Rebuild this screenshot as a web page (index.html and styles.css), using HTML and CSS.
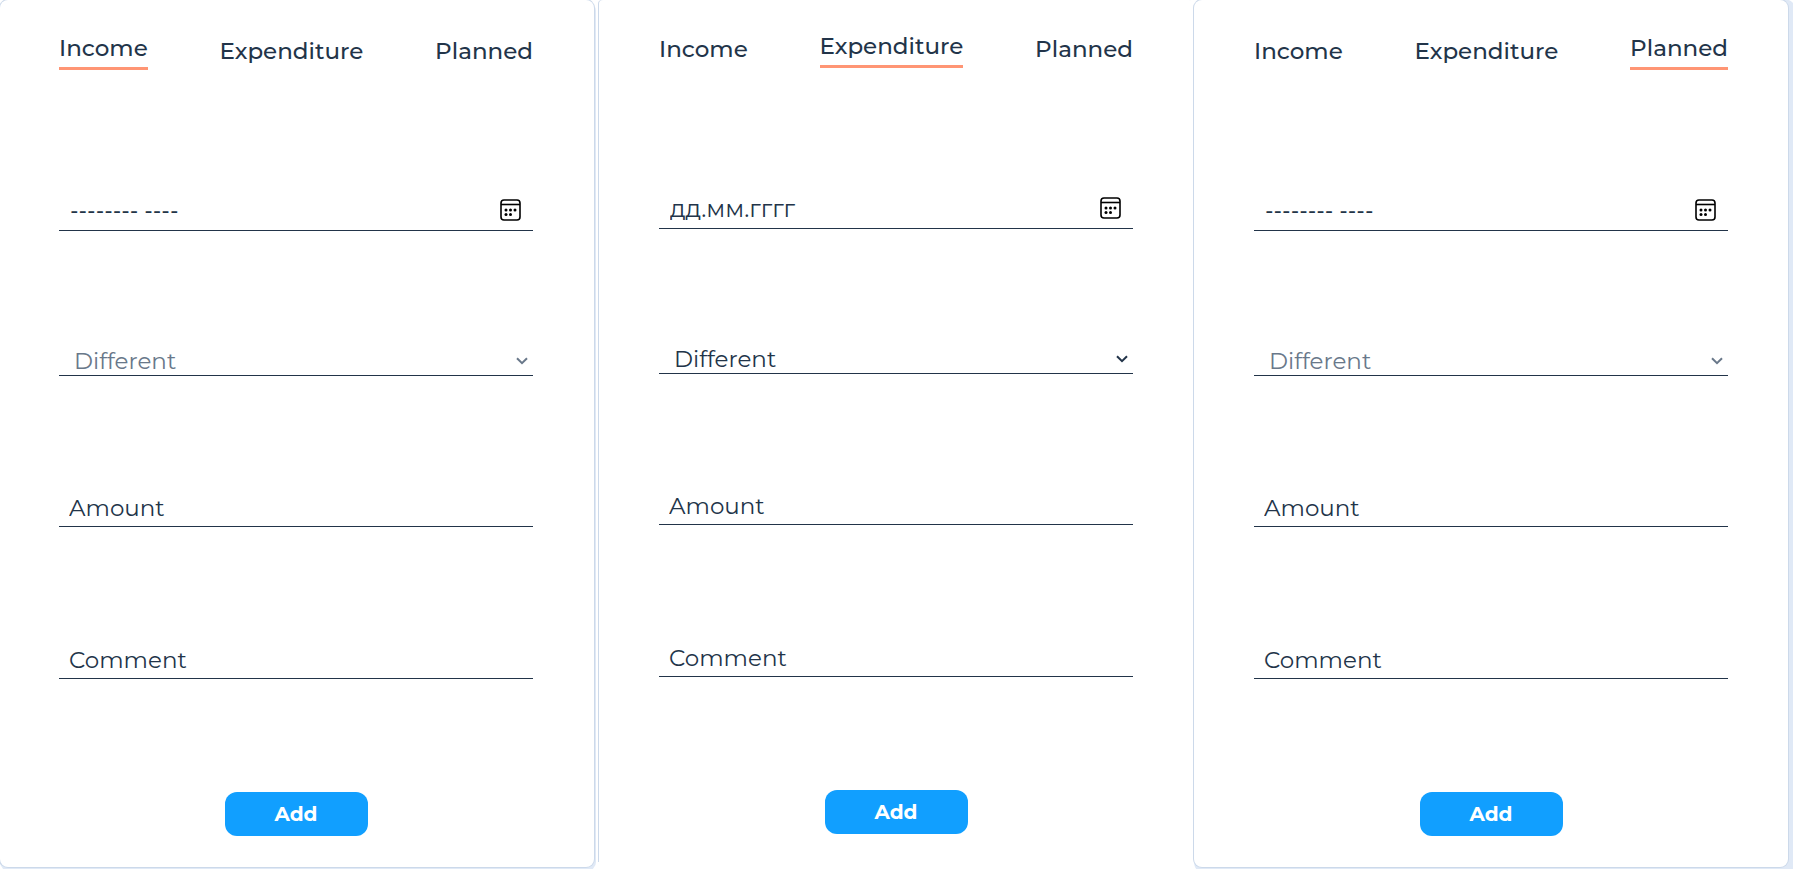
FILE: index.html
```
<!DOCTYPE html>
<html lang="en">
<head>
<meta charset="utf-8">
<meta name="viewport" content="width=device-width, initial-scale=1">
<title>Transactions</title>
<link rel="stylesheet" href="styles.css">
</head>
<body>
<svg class="sprite" aria-hidden="true">
  <symbol id="calendar" viewBox="0 0 22 22">
    <rect x="1" y="1" width="19" height="20" rx="3" fill="none" stroke="#000" stroke-width="1.6"/>
    <path d="M1 5.500h19" stroke="#000" stroke-width="1.6"/>
    <g fill="#000"><circle cx="6" cy="11" r="1.500"/><circle cx="10.500" cy="11" r="1.500"/><circle cx="15" cy="11" r="1.500"/><circle cx="6" cy="15.500" r="1.500"/><circle cx="10.500" cy="15.500" r="1.500"/></g>
  </symbol>
  <symbol id="chevron" viewBox="0 0 12 8">
    <path d="M1 1.200l5 5 5-5" fill="none" stroke="currentColor" stroke-width="2"/>
  </symbol>
</svg>
<main class="board">
  <form class="card card-first">
    <nav class="tabs">
      <a class="tab tab-active" href="#income">Income</a>
      <a class="tab" href="#expenditure">Expenditure</a>
      <a class="tab" href="#planned">Planned</a>
    </nav>
    <div class="field field-date">
      <input class="control control-dashes" type="text" aria-label="Date" value="-------- ----">
      <button class="picker" type="button" aria-label="Open calendar"><svg class="calendar"><use href="#calendar"/></svg></button>
    </div>
    <div class="field field-select field-muted">
      <select class="control" aria-label="Category"><option>Different</option></select>
      <svg class="chevron"><use href="#chevron"/></svg>
    </div>
    <div class="field field-amount"><input class="control" type="text" aria-label="Amount" placeholder="Amount"></div>
    <div class="field field-comment"><input class="control" type="text" aria-label="Comment" placeholder="Comment"></div>
    <button class="add" type="button">Add</button>
  </form>

  <form class="card card-middle">
    <nav class="tabs">
      <a class="tab" href="#income">Income</a>
      <a class="tab tab-active" href="#expenditure">Expenditure</a>
      <a class="tab" href="#planned">Planned</a>
    </nav>
    <div class="field field-date">
      <input class="control control-date" type="text" aria-label="Date" value="дд.мм.гггг">
      <button class="picker" type="button" aria-label="Open calendar"><svg class="calendar"><use href="#calendar"/></svg></button>
    </div>
    <div class="field field-select">
      <select class="control" aria-label="Category"><option>Different</option></select>
      <svg class="chevron"><use href="#chevron"/></svg>
    </div>
    <div class="field field-amount"><input class="control" type="text" aria-label="Amount" placeholder="Amount"></div>
    <div class="field field-comment"><input class="control" type="text" aria-label="Comment" placeholder="Comment"></div>
    <button class="add" type="button">Add</button>
  </form>

  <form class="card card-last">
    <nav class="tabs">
      <a class="tab" href="#income">Income</a>
      <a class="tab" href="#expenditure">Expenditure</a>
      <a class="tab tab-active" href="#planned">Planned</a>
    </nav>
    <div class="field field-date">
      <input class="control control-dashes" type="text" aria-label="Date" value="-------- ----">
      <button class="picker" type="button" aria-label="Open calendar"><svg class="calendar"><use href="#calendar"/></svg></button>
    </div>
    <div class="field field-select field-muted">
      <select class="control" aria-label="Category"><option>Different</option></select>
      <svg class="chevron"><use href="#chevron"/></svg>
    </div>
    <div class="field field-amount"><input class="control" type="text" aria-label="Amount" placeholder="Amount"></div>
    <div class="field field-comment"><input class="control" type="text" aria-label="Comment" placeholder="Comment"></div>
    <button class="add" type="button">Add</button>
  </form>
</main>
</body>
</html>
```
FILE: styles.css
```
* { box-sizing: border-box; }
body {
  margin: 0;
  background: #fff;
  color: #223449;
  font-family: Montserrat, Inter, "Noto Sans", sans-serif;
  font-size: 23px;
}
.sprite { display: none; }
.board {
  display: flex;
  min-height: 100vh;
  padding-right: 5px;
  overflow: hidden;
}
.card {
  flex: 1 1 0;
  min-width: 0;
  display: flex;
  flex-direction: column;
  margin-bottom: 4px;
  padding: 34px 60px 28px;
  border-radius: 8px;
  background: #fff;
}
.card-first {
  padding-left: 59px;
  padding-right: 61px;
  margin-right: 5px;
  box-shadow: 0 0 0 1px #ccd9ea, 1px 3px 0 1px #e0e9f6;
}
.card-middle {
  padding-top: 32px;
  margin-right: 1px;
  margin-bottom: 9px;
  border-radius: 4px 4px 0 0;
  box-shadow: -1px 0 0 #ccd9ea;
}
.card-last { box-shadow: 0 0 0 1px #ccd9ea, 4px 3px 0 4px #e0e9f6; }

.tabs {
  display: flex;
  justify-content: space-between;
  align-items: center;
  height: 36px;
}
.tab {
  padding-bottom: 2px;
  line-height: 28px;
  color: inherit;
  font-weight: 500;
  text-decoration: none;
}
.tab-active {
  padding-bottom: 5px;
  border-bottom: 3px solid #ff9574;
}
.field {
  display: flex;
  align-items: center;
  border-bottom: 1px solid #223449;
}
.control {
  flex: 1;
  min-width: 0;
  height: 100%;
  padding: 0 0 0 10px;
  border: 0;
  outline: 0;
  background: transparent;
  color: inherit;
  font: inherit;
  appearance: none;
}
.control::placeholder { color: inherit; opacity: 1; }
.control-date { padding-left: 11px; font-size: 24px; }
.control-dashes { padding-left: 11px; font-family: Lato, sans-serif; }
.field-date { height: 41px; margin-top: 120px; }
.field-select { height: 32px; margin-top: 113px; padding-top: 2px; }
.field-select .control { padding-left: 15px; }
.field-muted .control, .field-muted .chevron { color: #69788a; }
.field-amount { height: 37px; margin-top: 114px; }
.field-comment { height: 38px; margin-top: 114px; }
.picker {
  display: flex;
  padding: 0;
  margin-right: 11px;
  border: 0;
  background: transparent;
}
.calendar { width: 22px; height: 22px; }
.chevron { width: 12px; height: 8px; margin-right: 5px; pointer-events: none; }
.add {
  align-self: center;
  width: 143px;
  height: 44px;
  margin-top: 113px;
  border: 0;
  border-radius: 12px;
  background: #119fff;
  color: #fff;
  font-family: inherit;
  font-size: 20px;
  font-weight: 700;
}
```
